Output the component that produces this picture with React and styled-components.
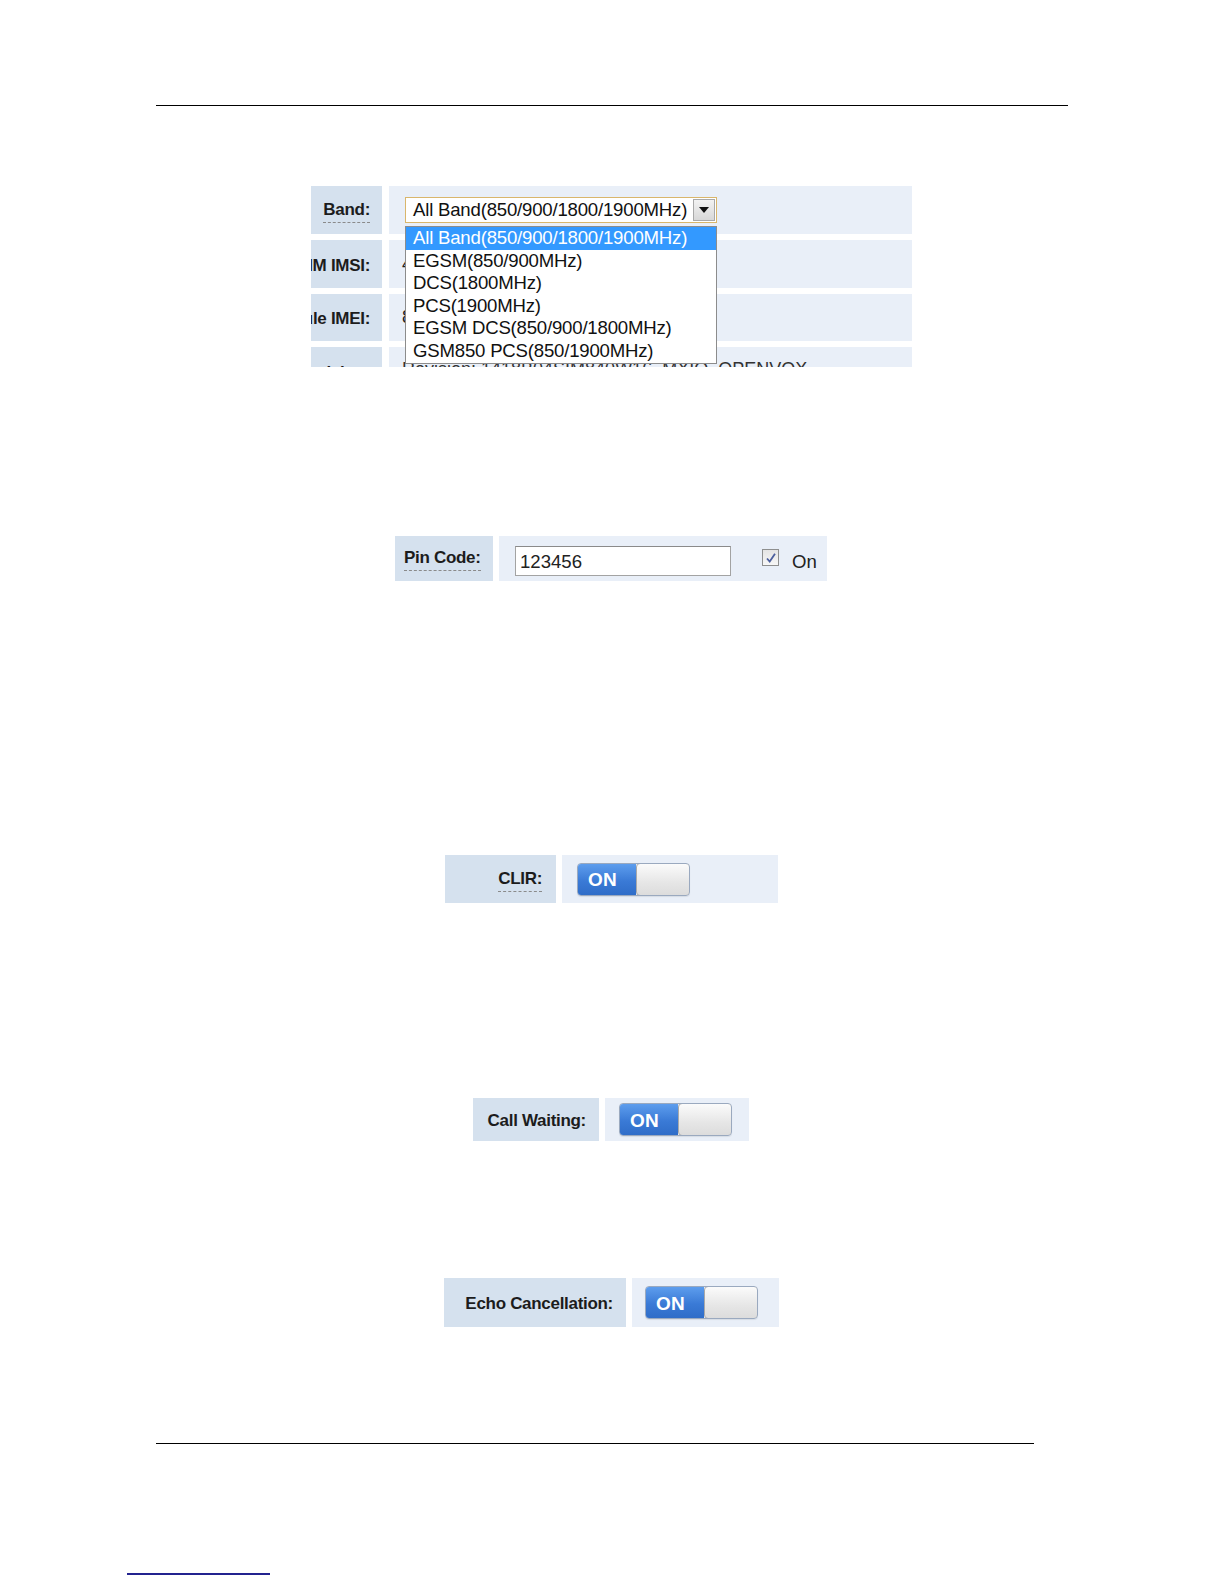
import React from 'react'
import styled, { createGlobalStyle } from 'styled-components'

const Global = createGlobalStyle`
  html, body {
    margin: 0;
    padding: 0;
    background: #fff;
  }
  body {
    font-family: "Liberation Sans", Arial, sans-serif;
    color: #111;
  }
`

const Page = styled.div`
  width: 1224px;
  height: 1584px;
  display: flex;
  flex-direction: column;
  padding-top: 105px;
  box-sizing: border-box;
  overflow: hidden;
`

const Rule = styled.div`
  height: ${props => props.thick || 1}px;
  width: ${props => props.width}px;
  margin-left: ${props => props.left}px;
  margin-top: ${props => props.top || 0}px;
  background: ${props => props.color || '#000'};
  flex: none;
`

const Figure = styled.div`
  display: flex;
  margin-left: ${props => props.left}px;
  margin-top: ${props => props.top}px;
  gap: ${props => props.gap || 6}px;
  height: ${props => props.height}px;
  flex: none;
`

/* ---- Band screenshot (cropped) ---- */

const BandGrid = styled.div`
  display: grid;
  grid-template-columns: 71px 523px;
  grid-template-rows: 48px 48px 47px 48px;
  column-gap: 7px;
  row-gap: 6px;
  height: 181px;
  overflow: hidden;
  margin-left: 311px;
  margin-top: 80px;
  flex: none;
`

const Label = styled.div`
  display: flex;
  align-items: center;
  justify-content: ${props => props.align || 'flex-end'};
  background: #d5e1ee;
  padding: 3px ${props => props.pad || 12}px 0 ${props => props.padLeft || 0}px;
  overflow: hidden;
  white-space: nowrap;
  width: ${props => (props.width ? props.width + 'px' : 'auto')};
  box-sizing: border-box;
  font-size: 17px;
  font-weight: bold;
  letter-spacing: -0.3px;
  color: #1c1c1c;
`

const Dashed = styled.span`
  flex: none;
  border-bottom: 1px dashed #8a8a8a;
  padding-bottom: 3px;
  line-height: 18px;
`

const Value = styled.div`
  display: flex;
  align-items: ${props => props.valign || 'center'};
  background: #e9eff8;
  padding-left: ${props => props.pad || 13}px;
  padding-top: ${props => props.padTop || 0}px;
  width: ${props => (props.width ? props.width + 'px' : 'auto')};
  box-sizing: border-box;
  font-size: 18px;
  color: #222;
  white-space: nowrap;
  overflow: ${props => (props.clip ? 'hidden' : 'visible')};
  position: relative;
`

const SelectWrap = styled.div`
  position: relative;
  margin-left: 3px;
  z-index: 2;
`

const SelectBox = styled.div`
  width: 312px;
  height: 26px;
  box-sizing: border-box;
  border: 1px solid #d9b66c;
  background: #fff;
  display: flex;
  align-items: center;
  padding-left: 7px;
  font-size: 18.6px;
  letter-spacing: -0.2px;
  color: #111;
`

const SelectText = styled.span`
  flex: 1;
`

const ArrowButton = styled.span`
  width: 22px;
  height: 22px;
  margin-right: 1px;
  box-sizing: border-box;
  border: 1px solid #a9a9a9;
  background: linear-gradient(#f2f2f2, #d8d8d8);
  display: flex;
  align-items: center;
  justify-content: center;
`

const ListBox = styled.ul`
  position: absolute;
  left: 0;
  top: 29px;
  width: 312px;
  box-sizing: border-box;
  margin: 0;
  padding: 0;
  list-style: none;
  background: #fff;
  border: 1px solid #8c8c8c;
`

const Option = styled.li`
  height: 22.6px;
  line-height: 22px;
  padding-left: 7px;
  font-size: 18.6px;
  letter-spacing: -0.2px;
  background: ${props => (props.selected ? '#3399ff' : 'transparent')};
  color: ${props => (props.selected ? '#fff' : '#111')};
`

const Clipped = styled.span`
  align-self: flex-start;
  padding-top: 12px;
  color: #333;
`

/* ---- Pin code ---- */

const TextInput = styled.div`
  width: 216px;
  height: 30px;
  margin-top: 4px;
  box-sizing: border-box;
  border: 1px solid #a3a3a3;
  border-top-color: #8a8a8a;
  background: #fff;
  display: flex;
  align-items: center;
  padding: 2px 0 0 4px;
  font-size: 18.6px;
  color: #222;
`

const CheckBox = styled.span`
  width: 17px;
  height: 17px;
  box-sizing: border-box;
  margin-left: 31px;
  margin-top: -2px;
  border: 1px solid #8e8f8f;
  background: linear-gradient(#e4e4e4, #f7f7f7);
  display: flex;
  align-items: center;
  justify-content: center;
`

const CheckLabel = styled.span`
  margin-left: 13px;
  padding-top: 6px;
  font-size: 18.6px;
  color: #222;
`

/* ---- Toggle ---- */

const Toggle = styled.div`
  display: flex;
  width: 113px;
  height: 33px;
  box-sizing: border-box;
  border-radius: 4px;
  border: 1px solid #9aa9bf;
  overflow: hidden;
  box-shadow: 0 1px 1px rgba(0, 0, 0, 0.08);
  flex: none;
`

const ToggleOn = styled.div`
  width: 58px;
  background: linear-gradient(#5d9ded, #3a7ad6 55%, #2f6dc8);
  color: #fff;
  font-weight: bold;
  font-size: 19px;
  display: flex;
  align-items: center;
  padding: 2px 0 0 10px;
  box-sizing: border-box;
  letter-spacing: 0.3px;
`

const ToggleKnob = styled.div`
  flex: 1;
  background: linear-gradient(#fbfbfb, #e6e6e6 60%, #dcdcdc);
  border: 1px solid #a9a9a9;
  border-radius: 4px;
  margin: -1px -1px -1px 0;
`

function Arrow() {
  return (
    <svg width="10" height="6" viewBox="0 0 10 6">
      <path d="M0 0 H10 L5 6 Z" fill="#111" />
    </svg>
  )
}

function Check() {
  return (
    <svg width="12" height="12" viewBox="0 0 12 12">
      <path d="M2 6.5 L4.7 9.5 L10 1.8" fill="none" stroke="#4c5f9e" strokeWidth="1.8" />
    </svg>
  )
}

function OnSwitch() {
  return (
    <Toggle>
      <ToggleOn>ON</ToggleOn>
      <ToggleKnob />
    </Toggle>
  )
}

const bands = [
  'All Band(850/900/1800/1900MHz)',
  'EGSM(850/900MHz)',
  'DCS(1800MHz)',
  'PCS(1900MHz)',
  'EGSM DCS(850/900/1800MHz)',
  'GSM850 PCS(850/1900MHz)',
]

export default function App() {
  return (
    <>
      <Global />
      <Page>
        <Rule left={156} width={912} />

        <BandGrid>
          <Label><Dashed>Band:</Dashed></Label>
          <Value pad={13}>
            <SelectWrap>
              <SelectBox>
                <SelectText>{bands[0]}</SelectText>
                <ArrowButton><Arrow /></ArrowButton>
              </SelectBox>
              <ListBox>
                {bands.map((b, i) => (
                  <Option key={b} selected={i === 0}>{b}</Option>
                ))}
              </ListBox>
            </SelectWrap>
          </Value>
          <Label>SIM IMSI:</Label>
          <Value>460012345678901</Value>
          <Label>Module IMEI:</Label>
          <Value>861234567890123</Value>
          <Label>Revision:</Label>
          <Value clip><Clipped>Revision: 1418B04SIM840W16_MXIO_OPENVOX</Clipped></Value>
        </BandGrid>

        <Figure left={395} top={169} height={45}>
          <Label width={98} align="flex-start" pad={0} padLeft={9}>
            <Dashed>Pin Code:</Dashed>
          </Label>
          <Value width={328} pad={16}>
            <TextInput>123456</TextInput>
            <CheckBox><Check /></CheckBox>
            <CheckLabel>On</CheckLabel>
          </Value>
        </Figure>

        <Figure left={445} top={274} height={48}>
          <Label width={111} pad={14}><Dashed>CLIR:</Dashed></Label>
          <Value width={216} pad={15}>
            <OnSwitch />
          </Value>
        </Figure>

        <Figure left={473} top={195} height={43}>
          <Label width={126} pad={13}>Call Waiting:</Label>
          <Value width={144} pad={14}>
            <OnSwitch />
          </Value>
        </Figure>

        <Figure left={444} top={137} height={49}>
          <Label width={182} pad={13}>Echo Cancellation:</Label>
          <Value width={147} pad={13}>
            <OnSwitch />
          </Value>
        </Figure>

        <Rule left={156} width={878} top={116} />
        <Rule left={127} width={143} top={129} thick={2} color="#23238f" />
      </Page>
    </>
  )
}
